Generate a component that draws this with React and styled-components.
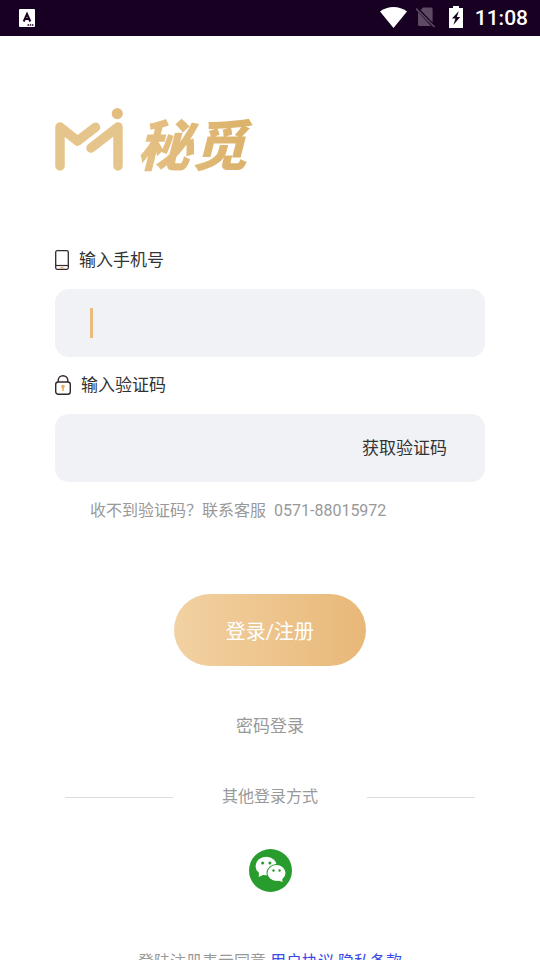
import React, { useState } from "react";
import styled, { createGlobalStyle } from "styled-components";

const GlobalStyle = createGlobalStyle`
  * {
    box-sizing: border-box;
  }

  body {
    margin: 0;
    background: #fff;
    color: #333;
    font-family: Roboto, "Noto Sans CJK SC", sans-serif;
  }

  button,
  input {
    font-family: inherit;
    border: 0;
    background: none;
    padding: 0;
  }
`;

const Screen = styled.div`
  display: flex;
  flex-direction: column;
  height: 100vh;
`;

const StatusBar = styled.header`
  display: flex;
  flex: none;
  align-items: center;
  justify-content: space-between;
  height: 36px;
  padding: 0 12px 0 19px;
  background: #170021;
  color: #fff;
`;

const StatusIcons = styled.div`
  display: flex;
  align-items: center;

  svg {
    display: block;
    margin-bottom: 2px;
  }
`;

const Clock = styled.time`
  margin-left: 2px;
  font-size: 21px;
  font-weight: 500;
  line-height: 36px;
`;

const StatusGlyphs = styled.div`
  display: flex;
  align-items: center;
  gap: 9px;
  margin-right: 9px;
`;

const Main = styled.main`
  flex: 1;
  min-height: 0;
  padding: 72px 55px 24px;
  overflow-y: auto;
  scrollbar-width: none;
`;

const Brand = styled.h1`
  display: flex;
  align-items: center;
  gap: 14px;
  height: 64px;
  margin: 0 0 72px;
`;

const BrandName = styled.span`
  padding: 4px 12px 0 0;
  font-family: "Noto Sans CJK SC", sans-serif;
  font-size: 55px;
  font-style: italic;
  font-weight: 900;
  line-height: 76px;
  background: linear-gradient(90deg, #e5c185, #dbb168);
  background-clip: text;
  color: transparent;
`;

const Label = styled.label`
  display: flex;
  align-items: center;
  gap: 10px;
  height: 32px;
  margin-bottom: 13px;
  font-size: 17px;
  line-height: 32px;
`;

const Field = styled.div`
  display: flex;
  align-items: center;
  height: 68px;
  margin-bottom: 12px;
  padding: 0 38px 0 35px;
  border-radius: 14px;
  background: #f1f2f6;
`;

const Caret = styled.span`
  flex: none;
  width: 3px;
  height: 30px;
  background: #e9bc7d;
`;

const TextInput = styled.input`
  flex: 1;
  min-width: 0;
  height: 100%;
  font-size: 17px;
  outline: none;
  caret-color: #e9bc7d;
`;

const CodeButton = styled.button`
  color: #333;
  font-size: 17px;
  line-height: 24px;
  cursor: pointer;
`;

const Hint = styled.p`
  display: flex;
  gap: 8px;
  margin: 0 0 67px;
  padding: 1px 0 0 35px;
  color: #999;
  font-size: 16px;
  line-height: 32px;
`;

const Actions = styled.div`
  display: flex;
  flex-direction: column;
  align-items: center;
`;

const SubmitButton = styled.button`
  width: 192px;
  height: 72px;
  margin-bottom: 44px;
  border-radius: 36px;
  background: linear-gradient(90deg, #f2d1a2, #e8b878);
  color: #fff;
  font-size: 20px;
  cursor: pointer;
`;

const PlainLink = styled.a`
  color: ${({ $color }) => $color || "#999"};
  font-size: ${({ $size }) => $size || 16}px;
  line-height: 32px;
  text-decoration: none;
`;

const Divider = styled.div`
  display: flex;
  align-items: center;
  gap: 49px;
  margin: 39px 10px 36px;
  color: #999;
  font-size: 16px;
  line-height: 32px;

  &::before,
  &::after {
    content: "";
    flex: 1;
    height: 1px;
    background: #ddd;
  }
`;

const WechatButton = styled.button`
  width: 43px;
  height: 43px;
  margin-bottom: 54px;
  cursor: pointer;

  svg {
    display: block;
  }
`;

const Agreement = styled.p`
  display: flex;
  justify-content: center;
  gap: 4px;
  margin: 0;
  color: #999;
  font-size: 16px;
  line-height: 32px;
`;

const KeyboardIcon = () => (
  <svg width='16' height='18' viewBox='0 0 16 18' aria-hidden='true'>
    <rect width='16' height='18' rx='1' fill='#fff' />
    <path
      d='M4.7 12.5 8 5l3.3 7.5M6 10h4'
      fill='none'
      stroke='#170021'
      strokeWidth='2'
    />
    <path d='M8.5 16h6' stroke='#170021' strokeWidth='1.4' strokeDasharray='1.5 .7' />
  </svg>
);

const WifiIcon = () => (
  <svg width='27' height='21' viewBox='0 0 27 21' aria-hidden='true'>
    <path d='M0 4.6C7.5-1.4 19.5-1.4 27 4.6L13.5 21z' fill='#fff' />
  </svg>
);

const NoSimIcon = () => (
  <svg width='21' height='22' viewBox='0 0 21 22' aria-hidden='true'>
    <path d='M7 1.5h8q1.6 0 1.6 1.6v13.4L4.6 4z' fill='#5c4b63' />
    <path d='M2 6v12.4q0 1.6 1.6 1.6h11.4z' fill='#5c4b63' />
    <path d='M0 2.5l18.5 18.5' stroke='#5c4b63' strokeWidth='1.6' />
  </svg>
);

const BatteryIcon = () => (
  <svg width='18' height='22' viewBox='-3 0 18 22' aria-hidden='true'>
    <path d='M4 0h6v2h4v20H0V2h4z' fill='#fff' />
    <path d='M9.8 5 3 12.5h3.4L4.4 19 11.2 11H7.8z' fill='#170021' />
  </svg>
);

const BrandMark = () => (
  <svg width='68' height='64' viewBox='0 0 68 64' aria-hidden='true'>
    <g
      fill='none'
      stroke='#e6c58d'
      strokeWidth='9.5'
      strokeLinecap='round'
      strokeLinejoin='round'
    >
      <path d='M5 58V19L22.5 33 40.5 19.3' />
      <path d='M36 40 63 19V58' />
    </g>
    <circle cx='62.3' cy='5.6' r='5.6' fill='#e3be80' />
  </svg>
);

const PhoneIcon = () => (
  <svg width='14' height='20' viewBox='0 0 14 20' aria-hidden='true'>
    <rect
      x='.7'
      y='.7'
      width='12.6'
      height='18.6'
      rx='1.5'
      fill='none'
      stroke='#33292b'
      strokeWidth='1.3'
    />
    <path d='M1 15.5h12' stroke='#33292b' strokeWidth='1.2' />
    <path d='M5.5 17.6h3' stroke='#e9a960' strokeWidth='1.3' />
  </svg>
);

const LockIcon = () => (
  <svg width='16' height='20' viewBox='0 0 16 20' aria-hidden='true'>
    <g fill='none' stroke='#33292b' strokeWidth='1.4'>
      <rect x='.7' y='7' width='14.6' height='12.3' rx='2.5' />
      <path d='M3.2 7V5.5a4.8 4.8 0 0 1 9.6 0V7' />
    </g>
    <circle cx='8' cy='11.5' r='1.8' fill='#eda960' />
    <path d='M8 11.5V16' stroke='#eda960' strokeWidth='1.6' />
  </svg>
);

const WechatIcon = () => (
  <svg width='43' height='43' viewBox='0 0 43 43' aria-hidden='true'>
    <circle cx='21.5' cy='21.5' r='21.5' fill='#289c2d' />
    <ellipse cx='17.2' cy='17' rx='10.7' ry='9.2' fill='#fff' />
    <path d='M10 22 9.8 28 16 25z' fill='#fff' />
    <ellipse cx='27.5' cy='24' rx='10' ry='9' fill='#289c2d' />
    <ellipse cx='27.5' cy='24' rx='9' ry='7.9' fill='#fff' />
    <path d='M28 31 33.5 33 33 28z' fill='#fff' />
    <g fill='#289c2d'>
      <circle cx='13.6' cy='14' r='1.5' />
      <circle cx='20.9' cy='14' r='1.5' />
      <circle cx='24.5' cy='21.5' r='1.2' />
      <circle cx='30.6' cy='21.5' r='1.2' />
    </g>
  </svg>
);

const App = () => {
  const [phone, setPhone] = useState("");
  const [code, setCode] = useState("");

  return (
    <Screen>
      <GlobalStyle />
      <StatusBar>
        <KeyboardIcon />
        <StatusIcons>
          <StatusGlyphs>
            <WifiIcon />
            <NoSimIcon />
            <BatteryIcon />
          </StatusGlyphs>
          <Clock>11:08</Clock>
        </StatusIcons>
      </StatusBar>
      <Main>
        <Brand>
          <BrandMark />
          <BrandName>秘觅</BrandName>
        </Brand>
        <form onSubmit={(e) => e.preventDefault()}>
          <Label htmlFor='phone'>
            <PhoneIcon />
            输入手机号
          </Label>
          <Field>
            {!phone && <Caret />}
            <TextInput
              id='phone'
              type='tel'
              value={phone}
              onChange={(e) => setPhone(e.target.value)}
            />
          </Field>
          <Label htmlFor='code'>
            <LockIcon />
            输入验证码
          </Label>
          <Field>
            <TextInput
              id='code'
              inputMode='numeric'
              value={code}
              onChange={(e) => setCode(e.target.value)}
            />
            <CodeButton type='button'>获取验证码</CodeButton>
          </Field>
          <Hint>
            <span>收不到验证码？联系客服</span>
            <span>0571-88015972</span>
          </Hint>
          <Actions>
            <SubmitButton type='submit'>登录/注册</SubmitButton>
            <PlainLink href='#password' $size={17}>
              密码登录
            </PlainLink>
          </Actions>
        </form>
        <Divider>其他登录方式</Divider>
        <Actions>
          <WechatButton type='button' aria-label='微信登录'>
            <WechatIcon />
          </WechatButton>
        </Actions>
        <Agreement>
          <span>登陆注册表示同意</span>
          <PlainLink href='#terms' $color='#3a4be8'>
            用户协议
          </PlainLink>
          <PlainLink href='#privacy' $color='#3a4be8'>
            隐私条款
          </PlainLink>
        </Agreement>
      </Main>
    </Screen>
  );
};

export default App;
